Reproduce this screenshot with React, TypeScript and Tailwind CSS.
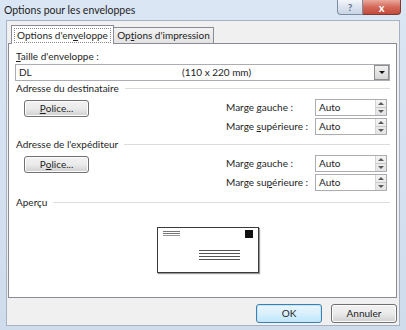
import React from "react";

const font = { fontFamily: 'Lato, "Noto Sans", sans-serif' };

function U({ children }: { children: React.ReactNode }) {
  return <span className="underline underline-offset-[1px]">{children}</span>;
}

function WinButton({ children, primary = false, className = "" }: { children: React.ReactNode; primary?: boolean; className?: string }) {
  return (
    <div
      className={`flex items-center justify-center whitespace-nowrap rounded-[3px] border text-[10px] text-[#1e1e1e] ${
        primary
          ? "border-[#3c7fb1] bg-gradient-to-b from-[#eaf6fd] via-[#d9f0fc] to-[#bee6fd] shadow-[inset_0_0_0_1px_#c4e5f6]"
          : "border-[#707070] bg-gradient-to-b from-[#f2f2f2] via-[#ebebeb] to-[#cfcfcf] shadow-[inset_0_0_0_1px_#fcfcfc]"
      } ${className}`}
    >
      {children}
    </div>
  );
}

function Spin() {
  return (
    <div className="flex h-[17px] w-[72px] border border-[#abadb3] bg-white">
      <div className="flex flex-1 items-center pl-[3px] text-[10px] text-[#1e1e1e]">Auto</div>
      <div className="flex w-[11px] flex-col border-l border-[#d5d5d5] bg-gradient-to-b from-[#f4f4f4] to-[#e3e3e3]">
        <div className="flex flex-1 items-center justify-center border-b border-[#c8c8c8]">
          <div className="h-0 w-0 border-x-[3px] border-b-[3px] border-x-transparent border-b-[#5a5a5a]" />
        </div>
        <div className="flex flex-1 items-center justify-center">
          <div className="h-0 w-0 border-x-[3px] border-t-[3px] border-x-transparent border-t-[#5a5a5a]" />
        </div>
      </div>
    </div>
  );
}

function GroupHeading({ label, className = "" }: { label: string; className?: string }) {
  return (
    <div className={`flex h-[14px] items-center gap-[6px] ${className}`}>
      <span className="whitespace-nowrap text-[10px] leading-[14px] text-[#1e1e1e]">{label}</span>
      <div className="h-px flex-1 bg-[#dcdcdc]" />
    </div>
  );
}

function AddressGroup({ police, gauche, sup, className = "" }: { police: React.ReactNode; gauche: React.ReactNode; sup: React.ReactNode; className?: string }) {
  return (
    <div className={`flex ${className}`}>
      <WinButton className="ml-[9px] mt-[1px] h-[17px] w-[65px]">{police}</WinButton>
      <div className="ml-auto mr-[3px] flex flex-col gap-[2px]">
        <div className="flex items-center">
          <span className="w-[89px] whitespace-nowrap text-[10px] text-[#1e1e1e]">{gauche}</span>
          <Spin />
        </div>
        <div className="flex items-center">
          <span className="w-[89px] whitespace-nowrap text-[10px] text-[#1e1e1e]">{sup}</span>
          <Spin />
        </div>
      </div>
    </div>
  );
}

function Envelope() {
  return (
    <div className="ml-[142px] mt-[18px] flex h-[46px] w-[102px] flex-col border border-[#3a3a3a] bg-white px-[5px] pt-[2px] shadow-[1px_1px_1px_#9a9a9a]">
      <div className="flex items-start justify-between">
        <div className="mt-[1px] flex flex-col gap-px">
          <div className="h-px w-[17px] bg-[#777]" />
          <div className="h-px w-[17px] bg-[#777]" />
          <div className="h-px w-[17px] bg-[#999]" />
        </div>
        <div className="h-[8px] w-[8px] bg-[#111]" />
      </div>
      <div className="ml-[36px] mt-[12px] flex flex-col gap-[2px]">
        <div className="h-px w-[41px] bg-[#555]" />
        <div className="h-px w-[41px] bg-[#555]" />
        <div className="h-px w-[41px] bg-[#555]" />
        <div className="h-px w-[41px] bg-[#555]" />
      </div>
    </div>
  );
}

export default function App() {
  return (
    <div style={font} className="flex h-[330px] w-[406px] flex-col overflow-hidden bg-gradient-to-b from-[#dbe6f4] to-[#cfdcec]">
      {/* title bar */}
      <div className="flex h-[20px] items-start justify-between">
        <div className="whitespace-nowrap pl-[4px] pt-[3px] text-[10.5px] leading-[14px] text-[#1e1e1e]">Options pour les enveloppes</div>
        <div className="mr-[5px] flex">
          <div className="flex h-[15px] w-[26px] items-center justify-center rounded-bl-[4px] border border-t-0 border-[#7b8ca3] bg-gradient-to-b from-[#f3f6fa] via-[#dbe3ee] to-[#c9d5e4] text-[10px] font-bold leading-none text-[#5d6f88]">
            ?
          </div>
          <div className="flex h-[15px] w-[38px] items-center justify-center rounded-br-[4px] border border-l-0 border-t-0 border-[#7b3a34] bg-gradient-to-b from-[#e9a99d] via-[#d4685a] to-[#c34a3b] text-[11px] font-bold leading-none text-white">
            x
          </div>
        </div>
      </div>

      {/* client */}
      <div className="mx-[6px] mb-[4px] flex flex-1 flex-col border border-[#a7b3c2] bg-[#f0f0f0] pl-[1px] pr-[2px]">
        <div className="ml-[3px] mt-[4px] flex items-end">
          <div className="relative z-10 -mb-px flex h-[19px] w-[103px] items-center justify-center whitespace-nowrap border border-b-0 border-[#898c95] bg-white text-[10px] text-[#1e1e1e]">
            <span className="border border-dotted border-[#888] px-[2px] leading-[13px]">
              Options d'en<U>v</U>eloppe
            </span>
          </div>
          <div className="flex h-[16px] w-[100px] items-center justify-center whitespace-nowrap border border-b-0 border-l-0 border-[#898c95] bg-gradient-to-b from-[#f2f2f2] to-[#e3e3e3] text-[10px] text-[#1e1e1e]">
            Op<U>t</U>ions d'impression
          </div>
        </div>

        {/* panel */}
        <div className="flex h-[255px] flex-col border border-[#898c95] bg-white pl-[6px] pr-[6px] pt-[5px]">
          <div className="ml-[1px] whitespace-nowrap text-[10px] leading-[14px] text-[#1e1e1e]">
            <U>T</U>aille d'enveloppe :
          </div>
          <div className="mt-px flex h-[17px] border border-[#abadb3] bg-white">
            <div className="flex flex-1 items-center whitespace-nowrap pl-[3px] text-[10px] text-[#1e1e1e]">
              <span className="w-[163px]">DL</span>
              <span>(110 x 220 mm)</span>
            </div>
            <div className="flex w-[15px] items-center justify-center border border-[#8e8f8f] bg-gradient-to-b from-[#f2f2f2] to-[#d5d5d5]">
              <div className="h-0 w-0 border-x-[3px] border-t-[3px] border-x-transparent border-t-[#111]" />
            </div>
          </div>

          <GroupHeading label="Adresse du destinataire" className="ml-[1px]" />
          <AddressGroup
            className="mt-[4px]"
            police={<><U>P</U>olice...</>}
            gauche={<>Marge <U>g</U>auche :</>}
            sup={<>Marge <U>s</U>upérieure :</>}
          />

          <GroupHeading label="Adresse de l'expéditeur" className="ml-[1px] mt-[2px]" />
          <AddressGroup
            className="mt-[4px]"
            police={<>P<U>o</U>lice...</>}
            gauche={<>Marge <U>g</U>auche :</>}
            sup={<>Marge su<U>p</U>érieure :</>}
          />

          <GroupHeading label="Aperçu" className="ml-[1px] mt-[4px]" />
          <Envelope />
        </div>

        {/* buttons */}
        <div className="mt-[6px] flex justify-end gap-[9px]">
          <WinButton primary className="h-[19px] w-[66px]">OK</WinButton>
          <WinButton className="h-[19px] w-[66px]">Annuler</WinButton>
        </div>
      </div>
    </div>
  );
}
